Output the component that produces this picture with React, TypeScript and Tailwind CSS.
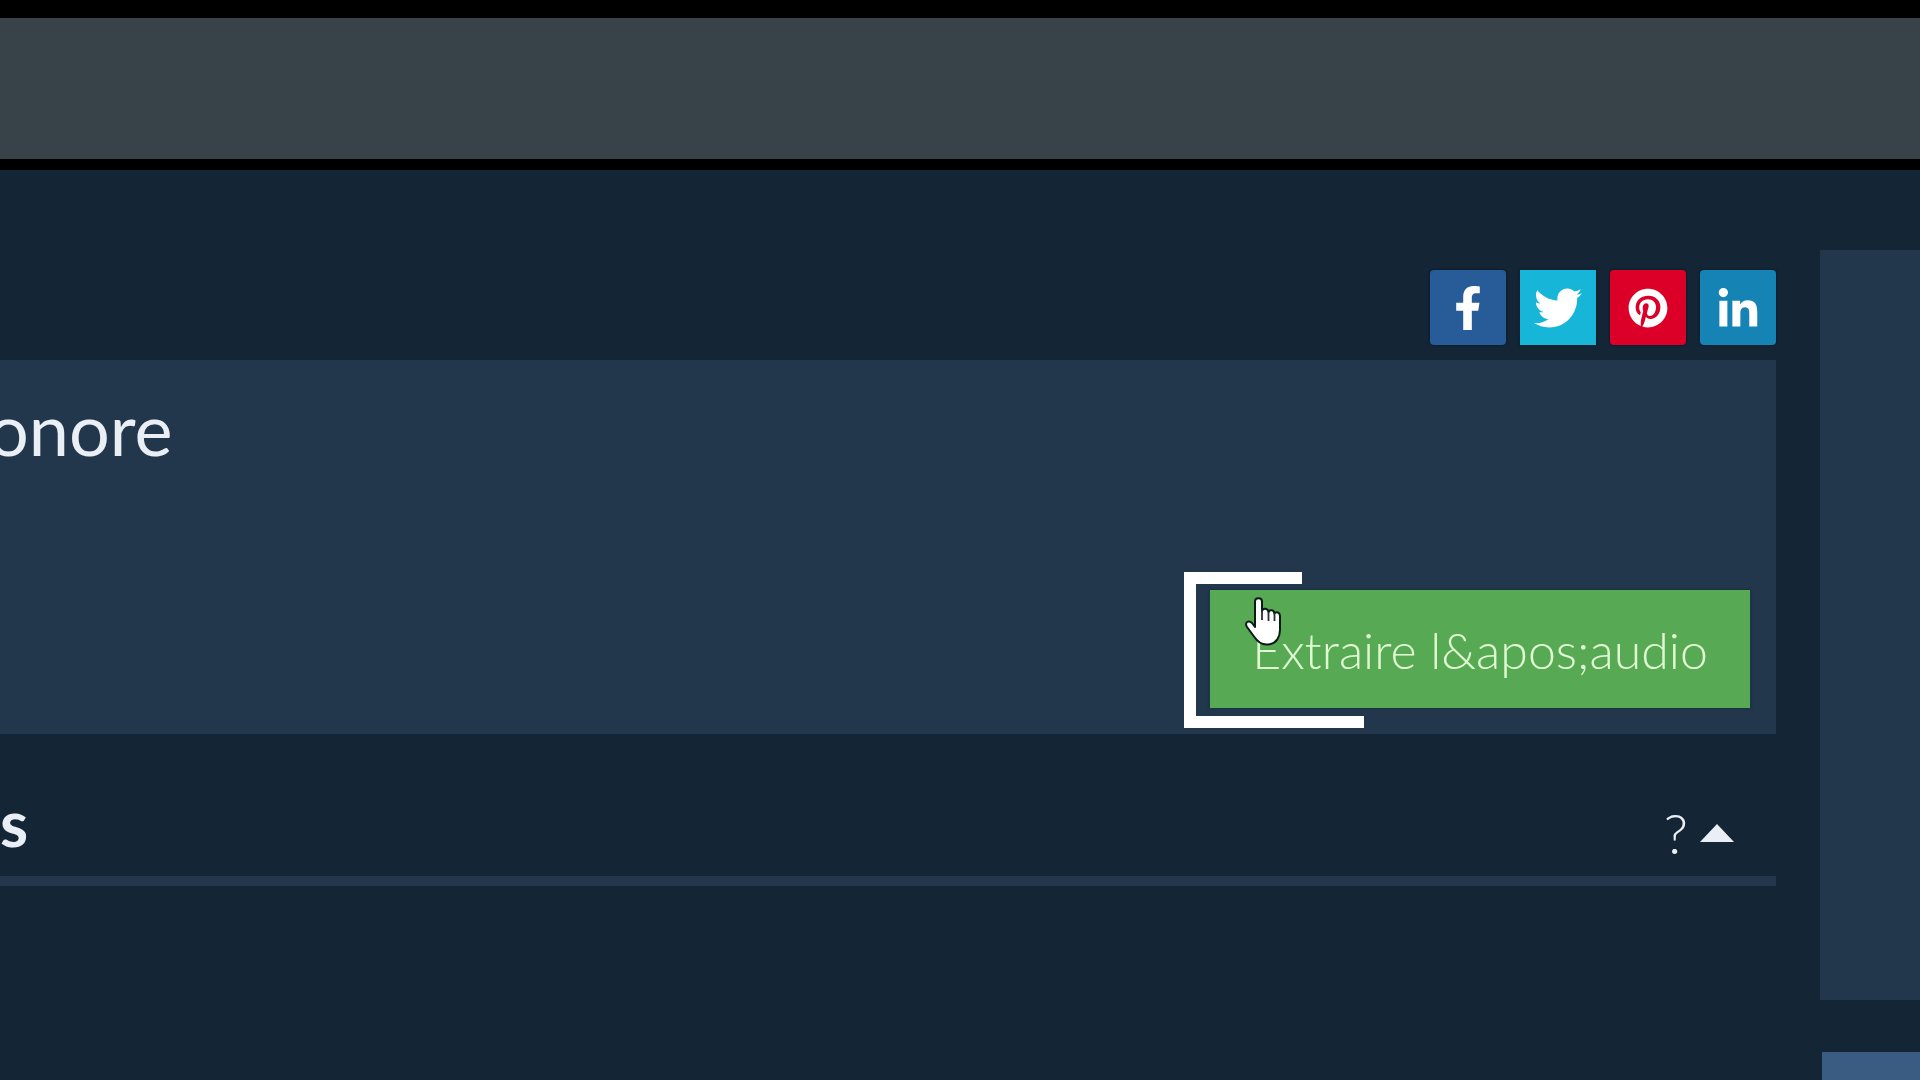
import { FaFacebookF, FaTwitter, FaPinterest, FaLinkedinIn } from "react-icons/fa";

const socials = [
  { name: "Facebook", Icon: FaFacebookF, className: "rounded-sm bg-[#285c98]", size: "size-11" },
  { name: "Twitter", Icon: FaTwitter, className: "bg-[#17b5d8]", size: "size-12" },
  { name: "Pinterest", Icon: FaPinterest, className: "rounded-sm bg-[#dc0028]", size: "size-10" },
  { name: "LinkedIn", Icon: FaLinkedinIn, className: "rounded-sm bg-[#1583b4] pt-1", size: "size-11" },
];

function HandCursor() {
  return (
    <svg viewBox="0 0 38 50" className="absolute left-[34px] top-1.5 h-[50px] w-[38px]" aria-hidden="true">
      <path
        d="M11 30V5.500C11 1 18 1 18 5.500V15C19 11.500 24 12 24.500 16C26 13 30 14 30.500 17.500C32.500 15 36 16.500 36 20V34C36 40 33 48 23.500 48.500C17 49 13 45 10 40.500L3 31C0 26 5 24 8 27L11 31Z"
        fill="#fff"
        stroke="#0a1a18"
        strokeWidth="2"
        strokeLinejoin="round"
      />
      <path d="M18 14V24M24.500 16V25M30.500 17V25" stroke="#2b2f38" strokeWidth="1.800" fill="none" />
    </svg>
  );
}

export default function App() {
  return (
    <div className="flex h-screen flex-col overflow-hidden bg-[#142635] font-['Lato',sans-serif] text-[#e9eff5]">
      <header className="h-[170px] shrink-0 border-t-[18px] border-b-[11px] border-black bg-[#384249]" />

      <div className="flex min-h-0 flex-1 gap-11">
        <main className="min-w-0 flex-1 pt-[100px]">
          <nav className="flex justify-end gap-[14px]">
            {socials.map(({ name, Icon, className, size }) => (
              <a
                key={name}
                href="#"
                aria-label={name}
                className={`flex h-[75px] w-[76px] items-center justify-center text-white shadow-[0_0_3px_#06142a] ${className}`}
              >
                <Icon className={size} />
              </a>
            ))}
          </nav>

          <section className="mt-[15px] flex h-[374px] flex-col justify-between bg-[#22374c] pt-[30px] pb-[26px]">
            <h1 className="-ml-3 text-[72px] leading-[76px]">onore</h1>
            <div className="relative mr-[26px] w-[540px] self-end">
              <button
                type="button"
                className="h-[118px] w-full cursor-pointer bg-[#57aa53] pt-0.5 text-[50px] font-light text-[#e0fbd3] shadow-[0_0_3px_#0c2a3a]"
              >
                Extraire l&amp;apos;audio
              </button>
              <span className="absolute -left-[26px] -top-[18px] h-3 w-[118px] bg-white" />
              <span className="absolute -left-[26px] -top-[18px] h-[156px] w-3 bg-white" />
              <span className="absolute -left-[26px] -bottom-5 h-3 w-[180px] bg-white" />
              <HandCursor />
            </div>
          </section>

          <section className="flex h-[152px] items-center justify-between border-b-[10px] border-[#22374c] pt-9 pr-[42px]">
            <h2 className="text-[64px] leading-[72px] font-bold">s</h2>
            <button type="button" aria-expanded="true" className="flex cursor-pointer items-center gap-3 pt-5">
              <span className="text-[56px] leading-[60px] font-light">?</span>
              <svg viewBox="0 0 34 18" className="h-[18px] w-[34px]" aria-hidden="true">
                <path d="M17 0L34 18H0Z" fill="#e9eff5" />
              </svg>
            </button>
          </section>
        </main>

        <aside className="flex w-[100px] shrink-0 flex-col gap-[52px] pt-20">
          <div className="h-[750px] shrink-0 bg-[#22374c]" />
          <div className="ml-0.5 flex-1 bg-[#3b5c82]" />
        </aside>
      </div>
    </div>
  );
}
